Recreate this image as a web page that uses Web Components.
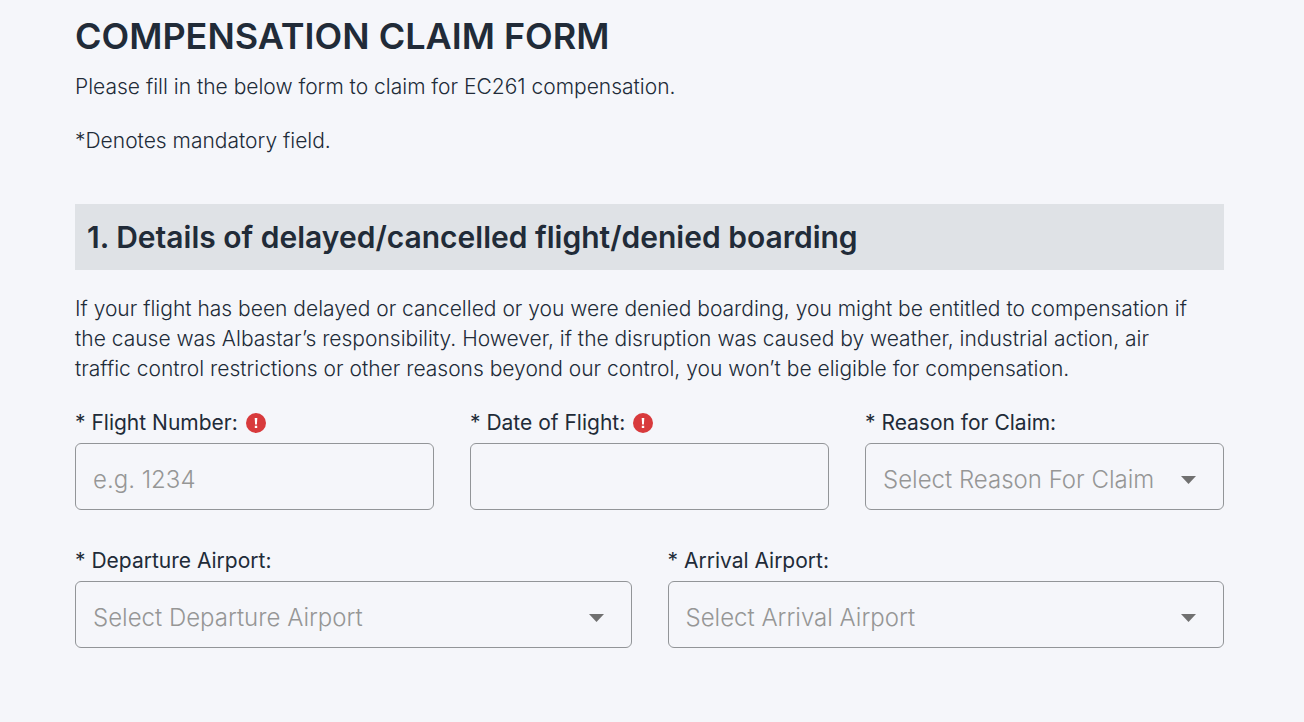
<!DOCTYPE html>
<html lang="en">
<head>
<meta charset="utf-8">
<meta name="viewport" content="width=device-width, initial-scale=1">
<title>Compensation Claim Form</title>
<style>
    body {
        margin: 0;
        background-color: #f5f6fa;
        color: #212b38;
        font-family: Inter, "Liberation Sans", sans-serif;
        font-size: 21px;
        font-weight: 300;
        line-height: 30px;
    }

    p {
        margin: 0 0 24px;
    }
</style>
</head>
<body>
<claim-form heading="COMPENSATION CLAIM FORM">
    <p slot="intro">Please fill in the below form to claim for EC261 compensation.</p>
    <p slot="intro">*Denotes mandatory field.</p>

    <form-section heading="1. Details of delayed/cancelled flight/denied boarding">
        <p slot="text">If your flight has been delayed or cancelled or you were denied boarding, you might be entitled to compensation if the cause was Albastar’s responsibility. However, if the disruption was caused by weather, industrial action, air traffic control restrictions or other reasons beyond our control, you won’t be eligible for compensation.</p>
        <form-row>
            <text-field label="Flight Number:" placeholder="e.g. 1234" alert></text-field>
            <text-field label="Date of Flight:" alert></text-field>
            <select-field label="Reason for Claim:" placeholder="Select Reason For Claim"></select-field>
        </form-row>
        <form-row>
            <select-field label="Departure Airport:" placeholder="Select Departure Airport"></select-field>
            <select-field label="Arrival Airport:" placeholder="Select Arrival Airport"></select-field>
        </form-row>
    </form-section>
</claim-form>

<script>
// Label and box styles shared by both kinds of field
const fieldStyles = `
    :host {
        display: block;
        flex: 1 1 0;
        min-width: 0;
    }

    .label {
        display: flex;
        align-items: center;
        gap: 8px;
        margin-bottom: 5px;
        font-weight: 400;
    }

    .control {
        display: block;
        width: 100%;
        height: 67px;
        margin: 0;
        padding: 6px 17px 0;
        box-sizing: border-box;
        border: 1px solid #929598;
        border-radius: 6px;
        background: transparent;
        color: #212b38;
        font-family: inherit;
        font-size: 24px;
        font-weight: 300;
        outline: none;
        appearance: none;
    }

    .control:focus {
        border-color: #212b38;
    }
`;

class ClaimForm extends HTMLElement {
    constructor() {
        super();
        this.attachShadow({ mode: 'open' });
    }

    connectedCallback() {
        this.shadowRoot.innerHTML = `
            <style>
                :host {
                    display: block;
                    padding: 12px 80px 48px 75px;
                }

                h1 {
                    margin: 0 0 12px;
                    font-size: 36px;
                    font-weight: 600;
                    line-height: 48px;
                }

                .intro {
                    padding-bottom: 24px;
                }
            </style>
            <form>
                <h1>${this.getAttribute('heading')}</h1>
                <div class="intro"><slot name="intro"></slot></div>
                <slot></slot>
            </form>
        `;
    }
}

class FormSection extends HTMLElement {
    constructor() {
        super();
        this.attachShadow({ mode: 'open' });
    }

    connectedCallback() {
        this.shadowRoot.innerHTML = `
            <style>
                :host {
                    display: block;
                }

                h2 {
                    margin: 0 0 24px;
                    padding: 12px;
                    background-color: #dfe2e6;
                    font-size: 30px;
                    font-weight: 600;
                    line-height: 42px;
                }

                .text {
                    padding-right: 24px;
                }

                .rows {
                    display: flex;
                    flex-direction: column;
                    gap: 36px;
                }
            </style>
            <section>
                <h2>${this.getAttribute('heading')}</h2>
                <div class="text"><slot name="text"></slot></div>
                <div class="rows"><slot></slot></div>
            </section>
        `;
    }
}

class FormRow extends HTMLElement {
    constructor() {
        super();
        this.attachShadow({ mode: 'open' });
    }

    connectedCallback() {
        this.shadowRoot.innerHTML = `
            <style>
                :host {
                    display: flex;
                    gap: 36px;
                }
            </style>
            <slot></slot>
        `;
    }
}

class AlertIcon extends HTMLElement {
    constructor() {
        super();
        this.attachShadow({ mode: 'open' });
    }

    connectedCallback() {
        this.shadowRoot.innerHTML = `
            <style>
                :host {
                    display: block;
                    width: 20px;
                    height: 20px;
                }

                svg {
                    display: block;
                }
            </style>
            <svg width="20" height="20" viewBox="0 0 20 20" aria-hidden="true">
                <circle cx="10" cy="10" r="10" fill="#d83a3c"/>
                <path d="M8.7 5h2.6l-.4 6.4H9.1zM8.8 12.8h2.4v2.2H8.8z" fill="#fff"/>
            </svg>
        `;
    }
}

class TextField extends HTMLElement {
    constructor() {
        super();
        this.attachShadow({ mode: 'open' });
    }

    connectedCallback() {
        const label = this.getAttribute('label');
        const placeholder = this.getAttribute('placeholder') || '';
        const icon = this.hasAttribute('alert') ? '<alert-icon></alert-icon>' : '';

        this.shadowRoot.innerHTML = `
            <style>
                ${fieldStyles}

                .control::placeholder {
                    color: #969696;
                    opacity: 1;
                }
            </style>
            <div class="label"><label for="field">* ${label}</label>${icon}</div>
            <input class="control" id="field" type="text" placeholder="${placeholder}" required>
        `;
    }
}

class SelectField extends HTMLElement {
    constructor() {
        super();
        this.attachShadow({ mode: 'open' });
    }

    connectedCallback() {
        const label = this.getAttribute('label');
        const placeholder = this.getAttribute('placeholder');

        this.shadowRoot.innerHTML = `
            <style>
                ${fieldStyles}

                .box {
                    display: grid;
                    align-items: center;
                }

                .box > * {
                    grid-area: 1 / 1;
                }

                .control {
                    padding-right: 60px;
                }

                .control:invalid {
                    color: #969696;
                }

                .arrow {
                    justify-self: end;
                    margin: 6px 28px 0 0;
                    pointer-events: none;
                }
            </style>
            <div class="label"><label for="field">* ${label}</label></div>
            <div class="box">
                <select class="control" id="field" required>
                    <option value="" selected>${placeholder}</option>
                </select>
                <svg class="arrow" width="15" height="8" viewBox="0 0 15 8" aria-hidden="true">
                    <path d="M0 0h15L7.5 8z" fill="#707070"/>
                </svg>
            </div>
        `;
    }
}

customElements.define('alert-icon', AlertIcon);
customElements.define('text-field', TextField);
customElements.define('select-field', SelectField);
customElements.define('form-row', FormRow);
customElements.define('form-section', FormSection);
customElements.define('claim-form', ClaimForm);
</script>
</body>
</html>
